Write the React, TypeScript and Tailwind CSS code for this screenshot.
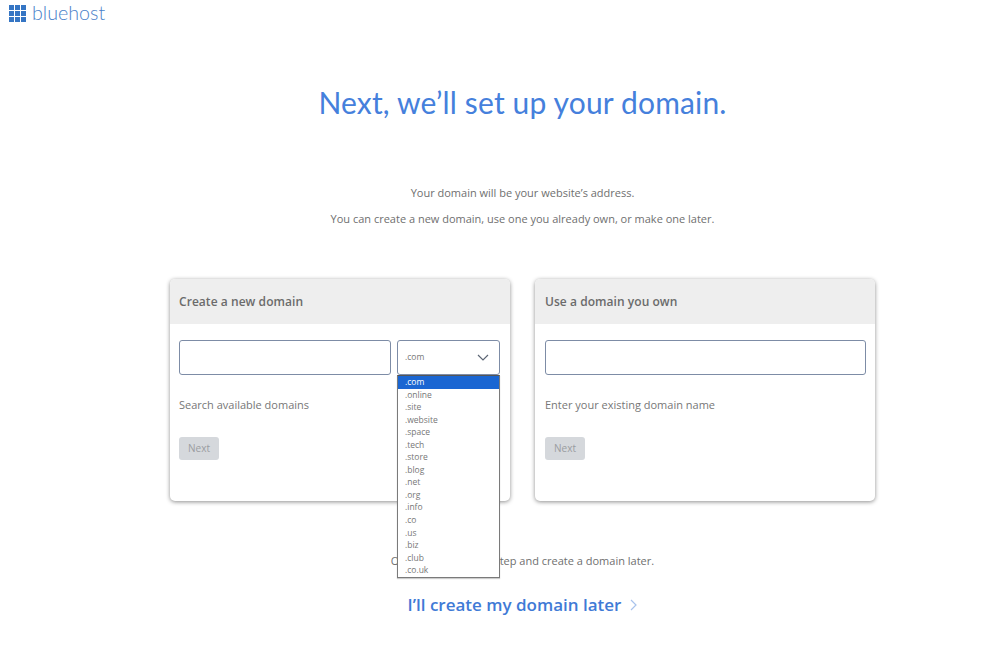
const tlds = [".com", ".online", ".site", ".website", ".space", ".tech", ".store", ".blog", ".net", ".org", ".info", ".co", ".us", ".biz", ".club", ".co.uk"];

function Logo() {
  return (
    <div className="flex items-start h-[27px] pl-[9px] gap-[6px]">
      <div className="mt-[5px] grid grid-cols-3 gap-[1.5px] w-[17px] h-[17px]">
        {Array.from({ length: 9 }).map((_, i) => (
          <div key={i} className="bg-[#3575c4]" />
        ))}
      </div>
      <span className="-mt-[1px] text-[19.7px] leading-[27px] text-[#4a82ca] font-light [font-family:Lato,sans-serif]">bluehost</span>
    </div>
  );
}

function Next() {
  return (
    <button className="block w-[40px] h-[23px] rounded-[3px] bg-[#d5d8dc] text-[#9a9da1] text-[10px]">Next</button>
  );
}

function Card({ title, hint, inset, children }: { title: string; hint: string; inset: string; children: React.ReactNode }) {
  return (
    <div className="w-[340px] h-[222px] rounded-[5px] bg-white shadow-[0_1px_4px_rgba(0,0,0,0.45)] overflow-hidden">
      <div className={`h-[45px] bg-[#eeeeee] ${inset} flex items-center text-[12px] tracking-[0.05px] font-semibold text-[#6b6b6b]`}>{title}</div>
      <div className={`${inset} pt-[16px]`}>
        {children}
        <div className="mt-[21px] text-[11px] leading-[17px] text-[#777777]">{hint}</div>
        <div className="mt-[24px]"><Next /></div>
      </div>
    </div>
  );
}

export default function App() {
  return (
    <div className="relative h-[669px] w-[1000px] bg-white overflow-hidden [font-family:'Open_Sans',sans-serif]">
      <Logo />
      <div className="ml-[170px] w-[705px] flex flex-col items-center">
        <h1 className="mt-[55px] text-[30px] tracking-[0.15px] leading-[40px] text-[#4580dc] [font-family:Lato,sans-serif]">Next, we’ll set up your domain.</h1>
        <p className="mt-[62px] text-[11px] leading-[17px] text-[#6f6f6f]">Your domain will be your website’s address.</p>
        <p className="mt-[9px] text-[11px] leading-[17px] text-[#6f6f6f]">You can create a new domain, use one you already own, or make one later.</p>
        <div className="mt-[52px] w-full flex justify-between">
          <Card title="Create a new domain" hint="Search available domains" inset="px-[9px]">
            <div className="flex gap-[6px]">
              <div className="w-[212px] h-[35px] rounded-[3px] border border-[#7d8ca6]" />
              <div className="relative w-[103px] h-[35px] rounded-[3px] border border-[#7d8ca6] flex items-center justify-between pl-[7px] pr-[10px] text-[8.5px] text-[#777777]">
                <span>.com</span>
                <svg width="12" height="7" viewBox="0 0 12 7" fill="none" stroke="#5d6675" strokeWidth="1.2"><path d="M1 1l5 5 5-5" /></svg>
              </div>
            </div>
          </Card>
          <Card title="Use a domain you own" hint="Enter your existing domain name" inset="pl-[10px] pr-[9px]">
            <div className="w-[321px] h-[35px] rounded-[3px] border border-[#7d8ca6]" />
          </Card>
        </div>
        <p className="mt-[51px] text-[11px] leading-[17px] text-[#6f6f6f]">Or you can skip this step and create a domain later.</p>
        <a className="mt-[24px] flex items-center gap-[9px] text-[17px] leading-[24px] font-semibold text-[#3f7ad6]">
          I’ll create my domain later
          <svg width="7" height="12" viewBox="0 0 7 12" fill="none" stroke="#a9c3ec" strokeWidth="1.2"><path d="M1 1l5 5-5 5" /></svg>
        </a>
      </div>
      <div className="absolute left-[397px] top-[375px] w-[103px] h-[203px] bg-white border border-[#7a7a7a] border-t-[#555555] text-[8.5px] leading-[12.56px] text-[#777777] shadow-[0_1px_1px_rgba(0,0,0,0.2)]">
        {tlds.map((t, i) => (
          <div key={t} className={i === 0 ? "pl-[7px] bg-[#1a66d2] text-white h-[12.56px]" : "pl-[7px] h-[12.56px]"}>{t}</div>
        ))}
      </div>
    </div>
  );
}
